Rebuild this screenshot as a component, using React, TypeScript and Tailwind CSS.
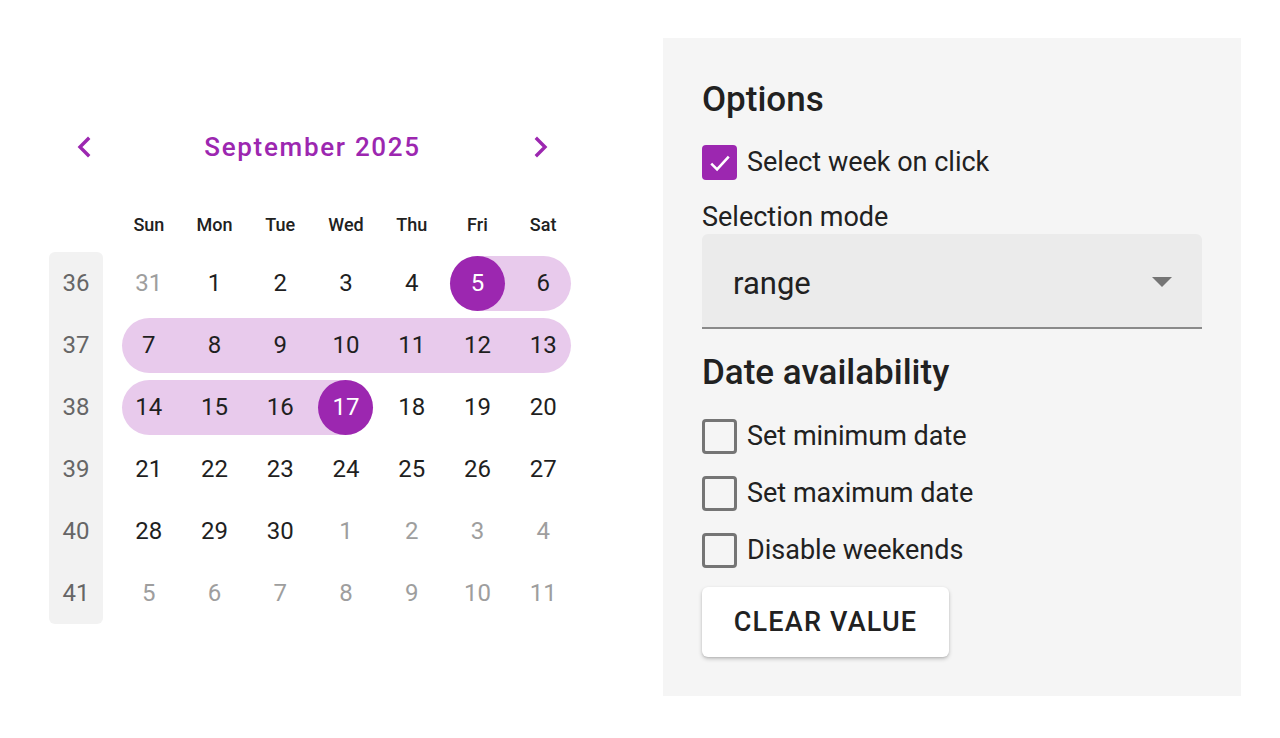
import React from 'react';

const weekdays = ['Sun', 'Mon', 'Tue', 'Wed', 'Thu', 'Fri', 'Sat'];

type Day = { d: number; outside?: boolean };

const weeks: { n: number; days: Day[] }[] = [
  { n: 36, days: [{ d: 31, outside: true }, { d: 1 }, { d: 2 }, { d: 3 }, { d: 4 }, { d: 5 }, { d: 6 }] },
  { n: 37, days: [7, 8, 9, 10, 11, 12, 13].map((d) => ({ d })) },
  { n: 38, days: [14, 15, 16, 17, 18, 19, 20].map((d) => ({ d })) },
  { n: 39, days: [21, 22, 23, 24, 25, 26, 27].map((d) => ({ d })) },
  { n: 40, days: [{ d: 28 }, { d: 29 }, { d: 30 }, { d: 1, outside: true }, { d: 2, outside: true }, { d: 3, outside: true }, { d: 4, outside: true }] },
  { n: 41, days: [5, 6, 7, 8, 9, 10, 11].map((d) => ({ d, outside: true })) },
];

const RANGE_START = 5;
const RANGE_END = 17;

function DayCell({ day, col }: { day: Day; col: number }) {
  const inRange = !day.outside && day.d >= RANGE_START && day.d <= RANGE_END;
  const selected = !day.outside && (day.d === RANGE_START || day.d === RANGE_END);
  const leftEdge = inRange && (col === 0 || day.d === RANGE_START);
  const rightEdge = inRange && (col === 6 || day.d === RANGE_END);

  return (
    <div className="relative h-[62px] flex items-center justify-center">
      {inRange && (
        <div
          className={`absolute top-[3.5px] bottom-[3.5px] bg-[#e8caec] ${
            leftEdge ? 'left-[5.5px] rounded-l-full' : 'left-0'
          } ${rightEdge ? 'right-[5.5px] rounded-r-full' : 'right-0'}`}
        />
      )}
      <div
        className={`relative w-[55px] h-[55px] rounded-full flex items-center justify-center text-[24px] ${
          selected
            ? 'bg-[#9c27b0] text-white'
            : day.outside
            ? 'text-[#9e9e9e]'
            : 'text-[#1f1f1f]'
        }`}
      >
        {day.d}
      </div>
    </div>
  );
}

function Chevron({ dir }: { dir: 'left' | 'right' }) {
  return (
    <svg width="16" height="22" viewBox="0 0 16 22" fill="none">
      <polyline
        points={dir === 'left' ? '12,3 4,11 12,19' : '4,3 12,11 4,19'}
        stroke="#9c27b0"
        strokeWidth="3.4"
        strokeLinecap="square"
        strokeLinejoin="miter"
      />
    </svg>
  );
}

function Checkbox({ checked, label }: { checked?: boolean; label: string }) {
  return (
    <label className="h-[35px] flex items-center gap-[10px]">
      {checked ? (
        <span className="w-[35px] h-[35px] rounded-[4px] bg-[#9c27b0] flex items-center justify-center">
          <svg width="28" height="28" viewBox="0 0 24 24" fill="none">
            <polyline points="4.5,12.5 9.5,17.5 19.5,6.5" stroke="white" strokeWidth="2.2" />
          </svg>
        </span>
      ) : (
        <span className="w-[35px] h-[35px] rounded-[4px] border-[3px] border-[#757575]" />
      )}
      <span className="text-[27px] leading-[35px] text-[#212121]">{label}</span>
    </label>
  );
}

export default function App() {
  return (
    <div
      className="w-[1280px] h-[738px] bg-white flex items-start"
      style={{ fontFamily: 'Roboto, "Noto Sans", sans-serif' }}
    >
      {/* Calendar */}
      <div className="ml-[49px] mt-[119px] w-[527px]">
        <div className="h-[56px] flex items-center justify-between">
          <button className="w-[70px] h-[56px] flex items-center justify-center">
            <Chevron dir="left" />
          </button>
          <div className="text-[26px] font-medium text-[#9c27b0] tracking-[1.7px]">September 2025</div>
          <button className="w-[70px] h-[56px] flex items-center justify-center">
            <Chevron dir="right" />
          </button>
        </div>

        <div className="mt-[29px] h-[40px] flex">
          <div className="w-[67px]" />
          <div className="w-[460px] grid grid-cols-7">
            {weekdays.map((w) => (
              <div key={w} className="flex items-center justify-center text-[18px] font-medium text-[#212121]">
                {w}
              </div>
            ))}
          </div>
        </div>

        <div className="mt-[8px] flex">
          <div className="w-[54px] bg-[#f2f2f2] rounded-[6px] flex flex-col">
            {weeks.map((w) => (
              <div key={w.n} className="h-[62px] flex items-center justify-center text-[24px] text-[#666666]">
                {w.n}
              </div>
            ))}
          </div>
          <div className="ml-[13px] w-[460px] flex flex-col">
            {weeks.map((w) => (
              <div key={w.n} className="grid grid-cols-7">
                {w.days.map((day, i) => (
                  <DayCell key={i} day={day} col={i} />
                ))}
              </div>
            ))}
          </div>
        </div>
      </div>

      {/* Options panel */}
      <div className="ml-[87px] mt-[38px] w-[578px] h-[658px] bg-[#f5f5f5] px-[39px] pt-[40px]">
        <h2 className="text-[35px] font-medium leading-[44px] text-[#212121]">Options</h2>
        <div className="mt-[23px]">
          <Checkbox checked label="Select week on click" />
        </div>
        <div className="mt-[20px] text-[27px] leading-[34px] text-[#212121]">Selection mode</div>
        <div className="h-[95px] bg-[#ebebeb] rounded-t-[6px] border-b-[2px] border-[#8a8a8a] flex items-center justify-between pl-[31px] pr-[30px]">
          <span className="text-[31px] text-[#212121] mt-[8px]">range</span>
          <svg width="20" height="10" viewBox="0 0 20 10" className="mt-[2px]">
            <polygon points="0,0 20,0 10,10" fill="#757575" />
          </svg>
        </div>
        <h2 className="mt-[20px] text-[35px] font-medium leading-[48px] text-[#212121]">Date availability</h2>
        <div className="mt-[22px] flex flex-col gap-[22px]">
          <Checkbox label="Set minimum date" />
          <Checkbox label="Set maximum date" />
          <Checkbox label="Disable weekends" />
        </div>
        <button className="mt-[19px] w-[247px] h-[70px] bg-white rounded-[6px] shadow-[0_2px_4px_rgba(0,0,0,0.2),0_1px_2px_rgba(0,0,0,0.1)] text-[27px] font-medium tracking-[1.2px] text-[#212121]">
          CLEAR VALUE
        </button>
      </div>
    </div>
  );
}
